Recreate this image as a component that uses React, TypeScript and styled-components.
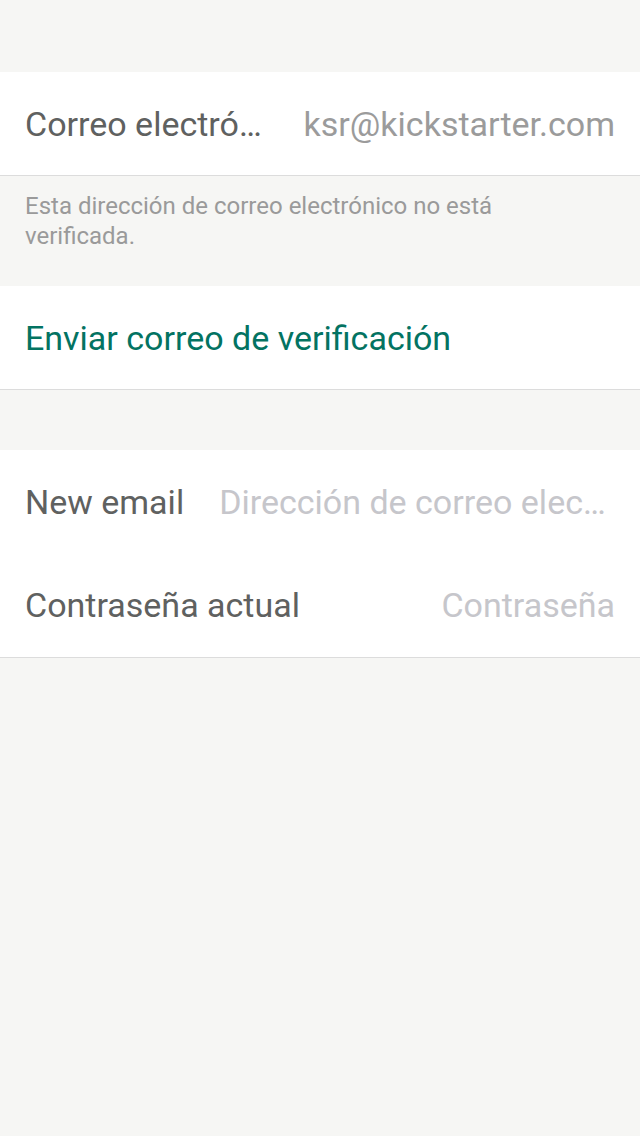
import React from "react";
import styled, { createGlobalStyle } from "styled-components";

const Global = createGlobalStyle`
  html, body { margin: 0; padding: 0; background: #f6f6f4; }
  body { font-family: Roboto, "Noto Sans", sans-serif; -webkit-font-smoothing: antialiased; }
`;

const Page = styled.div`
  min-height: 1136px;
  background: #f6f6f4;
  padding-top: 72px;
  box-sizing: border-box;
`;

const Card = styled.div`
  background: #fff;
  border-bottom: 1px solid #dcdcdc;
`;

const Row = styled.div<{ $tall?: boolean }>`
  height: ${(p) => (p.$tall ? 104 : 103)}px;
  display: flex;
  align-items: center;
  padding: 0 25px 0 25px;
  gap: 35px;
  box-sizing: border-box;
`;

const Label = styled.span<{ $shrink?: boolean }>`
  font-size: 34px;
  color: #5f6160;
  white-space: nowrap;
  overflow: hidden;
  text-overflow: ellipsis;
  flex: 0 ${(p) => (p.$shrink ? 1 : 0)} auto;
  min-width: 0;
`;

const Value = styled.span<{ $placeholder?: boolean; $fixed?: boolean }>`
  font-size: 34px;
  color: ${(p) => (p.$placeholder ? "#c6c6cb" : "#9b9b9b")};
  white-space: nowrap;
  overflow: hidden;
  text-overflow: ellipsis;
  flex: ${(p) => (p.$fixed ? "0 0 auto" : "1 1 auto")};
  min-width: 0;
  margin-left: auto;
  text-align: right;
`;

const Note = styled.p`
  margin: 0;
  padding: 15px 50px 35px 25px;
  font-size: 24px;
  line-height: 30px;
  color: #9a9a9a;
`;

const Action = styled.div`
  height: 103px;
  display: flex;
  align-items: center;
  padding: 0 25px;
  font-size: 34px;
  color: #037362;
`;

const Spacer = styled.div`
  height: 60px;
`;

export default function App() {
  return (
    <>
      <Global />
      <Page>
        <Card>
          <Row>
            <Label $shrink>Correo electrónico</Label>
            <Value $fixed>ksr@kickstarter.com</Value>
          </Row>
        </Card>
        <Note>Esta dirección de correo electrónico no está verificada.</Note>
        <Card>
          <Action>Enviar correo de verificación</Action>
        </Card>
        <Spacer />
        <Card>
          <Row>
            <Label>New email</Label>
            <Value $placeholder>Dirección de correo electrónico</Value>
          </Row>
          <Row $tall>
            <Label>Contraseña actual</Label>
            <Value $placeholder>Contraseña</Value>
          </Row>
        </Card>
      </Page>
    </>
  );
}
